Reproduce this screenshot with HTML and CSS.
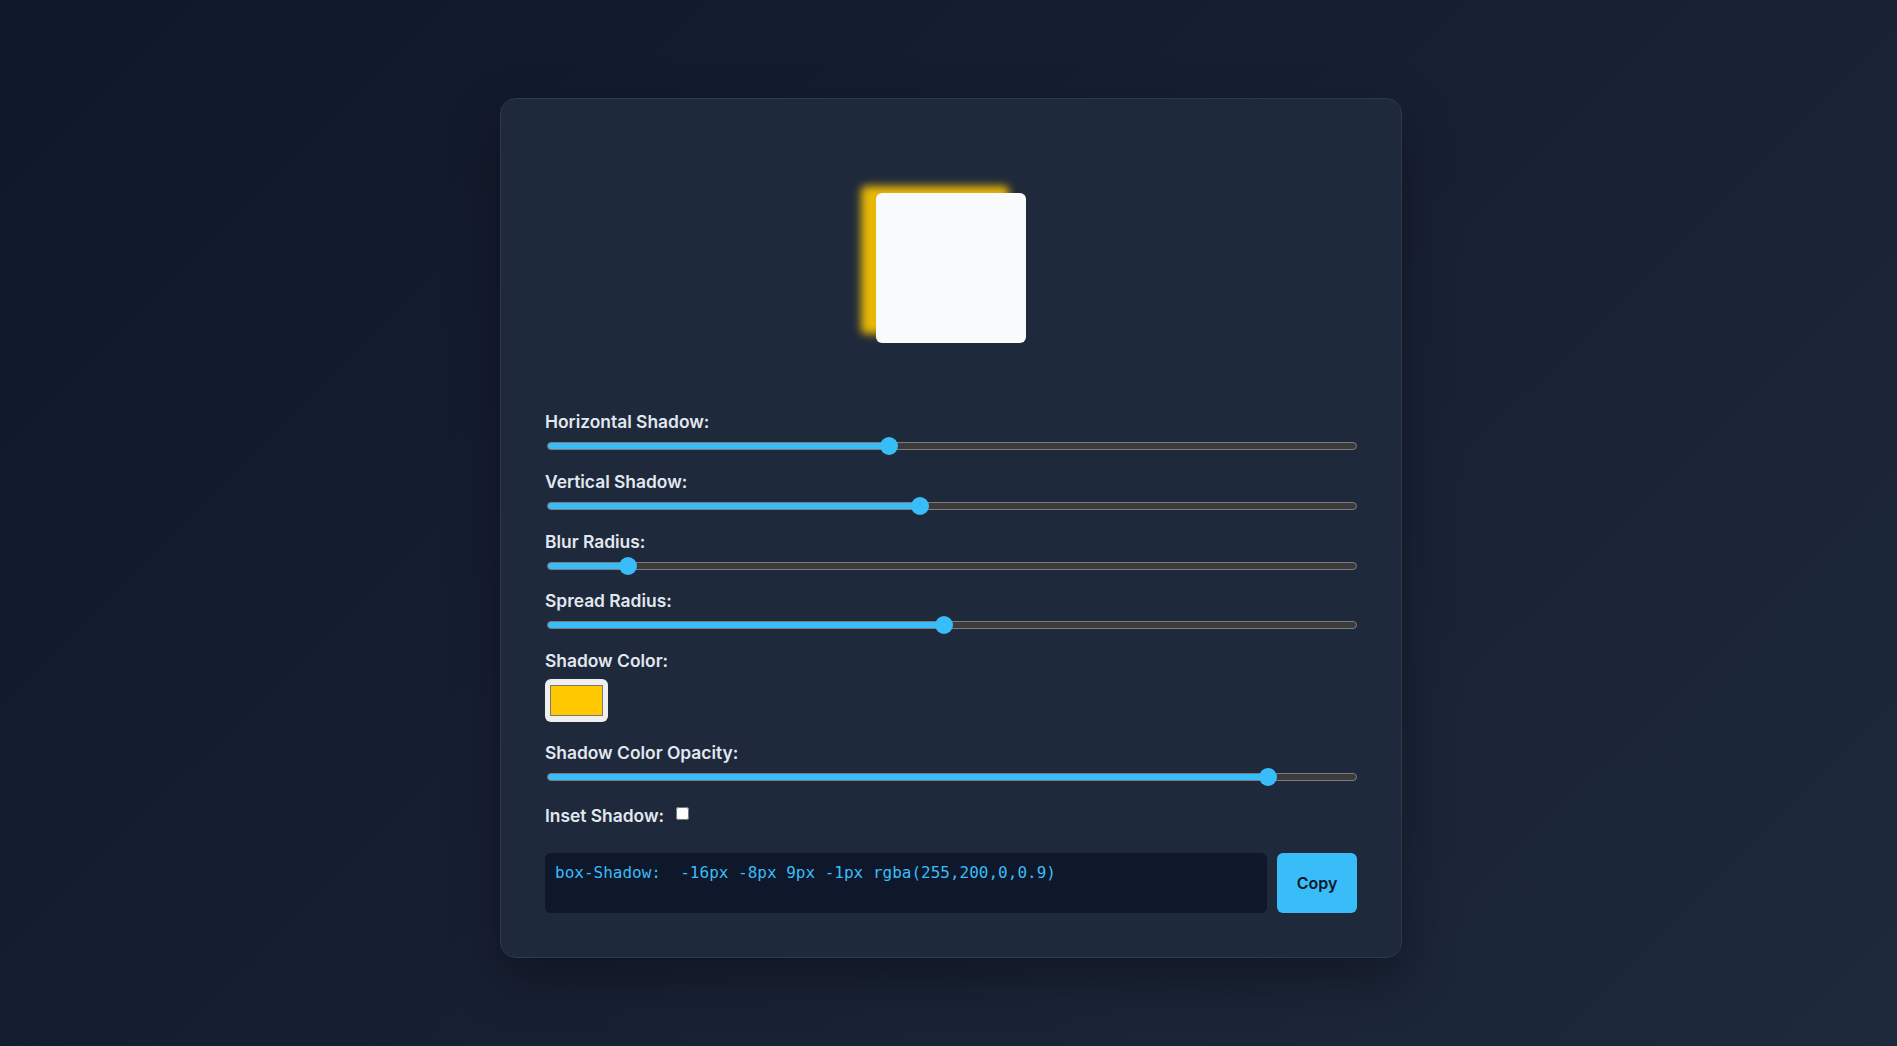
FILE: index.html
```html
<!DOCTYPE html>
<html lang="en">
<head>
<meta charset="utf-8">
<title>Box Shadow Generator</title>
<link rel="stylesheet" href="styles.css">
</head>
<body>
<main class="card">
  <div class="preview">
    <div class="box"></div>
  </div>
  <div class="controls">
    <div class="group">
      <label class="label" for="h">Horizontal Shadow:</label>
      <input class="range" id="h" type="range" min="-100" max="100" value="-16" style="--v:0.42">
    </div>
    <div class="group">
      <label class="label" for="v">Vertical Shadow:</label>
      <input class="range" id="v" type="range" min="-100" max="100" value="-8" style="--v:0.46">
    </div>
    <div class="group">
      <label class="label" for="b">Blur Radius:</label>
      <input class="range" id="b" type="range" min="0" max="100" value="9" style="--v:0.09">
    </div>
    <div class="group">
      <label class="label" for="s">Spread Radius:</label>
      <input class="range" id="s" type="range" min="-50" max="50" value="-1" style="--v:0.49">
    </div>
    <div class="group group-color">
      <label class="label" for="c">Shadow Color:</label>
      <input class="color" id="c" type="color" value="#ffc800">
    </div>
    <div class="group">
      <label class="label" for="o">Shadow Color Opacity:</label>
      <input class="range" id="o" type="range" min="0" max="1" step="0.1" value="0.9" style="--v:0.9">
    </div>
    <div class="inset-row">
      <label class="label" for="i">Inset Shadow:</label>
      <input class="check" id="i" type="checkbox">
    </div>
    <div class="output">
      <textarea class="code" readonly>box-Shadow:  -16px -8px 9px -1px rgba(255,200,0,0.9)</textarea>
      <button class="copy" type="button">Copy</button>
    </div>
  </div>
</main>
</body>
</html>
```

FILE: styles.css
```css
* { box-sizing: border-box; }

html, body { margin: 0; height: 100%; }

body {
  min-height: 100vh;
  padding: 9.5px 0 0 5px;
  display: flex;
  align-items: center;
  justify-content: center;
  background: linear-gradient(135deg, #0f172a 0%, #172033 50%, #1e293b 100%);
  font-family: Inter, "Noto Sans", sans-serif;
  color: #e2e8f0;
}

.card {
  width: 902px;
  padding: 44px;
  background: #1e293b;
  border: 1px solid #2c3a4f;
  border-radius: 16px;
  box-shadow: 0 20px 50px rgba(0, 0, 0, 0.35);
}

.preview {
  height: 250px;
  display: flex;
  align-items: center;
  justify-content: center;
  margin-bottom: 18.7px;
}

.box {
  width: 150px;
  height: 150px;
  background: #f8fafc;
  border-radius: 6px;
  box-shadow: -16px -8px 9px -1px rgba(255, 200, 0, 0.9);
}

.controls {
  display: flex;
  flex-direction: column;
}

.group {
  display: flex;
  flex-direction: column;
  align-items: flex-start;
  margin-bottom: 15.75px;
}

.label {
  font-size: 17.4px;
  font-weight: 600;
  line-height: 21.3px;
  color: #e2e8f0;
  margin-bottom: 4.7px;
}

.range {
  -webkit-appearance: none;
  appearance: none;
  width: calc(100% - 2px);
  height: 18px;
  margin: 0 0 0 2px;
  padding: 0;
  background: transparent;
  cursor: pointer;
}
.range::-webkit-slider-runnable-track {
  box-sizing: border-box;
  height: 8px;
  border: 1px solid #7c7c7c;
  border-radius: 4px;
  background: linear-gradient(to right, #38bdf8 calc(9px + (100% - 18px) * var(--v)), #3b3b3b 0);
}
.range::-webkit-slider-thumb {
  -webkit-appearance: none;
  appearance: none;
  width: 18px;
  height: 18px;
  margin-top: -6px;
  border: none;
  border-radius: 50%;
  background: #38bdf8;
}

.color {
  width: 63px;
  height: 43px;
  margin: 2.8px 0 4.7px 0;
  padding: 6px 5px;
  border: none;
  border-radius: 6px;
  background: #efefef;
  cursor: pointer;
}
.color::-webkit-color-swatch-wrapper { padding: 0; }
.color::-webkit-color-swatch { border: 1px solid #777777; border-radius: 0; }

.inset-row {
  display: flex;
  align-items: center;
  margin-top: 2.5px;
  margin-bottom: 27px;
}
.inset-row .label { margin-bottom: 0; }

.check {
  width: 13px;
  height: 13px;
  margin: 0 0 4px 12px;
}

.output {
  display: flex;
  gap: 10px;
}

.code {
  flex: 1;
  height: 60px;
  resize: none;
  border: none;
  outline: none;
  border-radius: 6px;
  background: #0f172a;
  color: #38bdf8;
  font-family: "DejaVu Sans Mono", "Liberation Mono", monospace;
  font-size: 16px;
  line-height: 20px;
  padding: 10px 10px;
}

.copy {
  width: 80px;
  height: 60px;
  border: none;
  border-radius: 6px;
  background: #38bdf8;
  color: #0f172a;
  font-family: Inter, "Noto Sans", sans-serif;
  font-size: 16px;
  font-weight: 600;
  cursor: pointer;
}
```
